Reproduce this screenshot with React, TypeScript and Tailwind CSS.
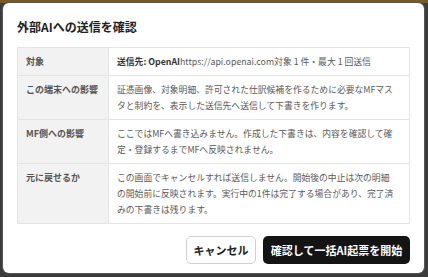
import * as React from "react"

const rows: { label: string; body: React.ReactNode }[] = [
  {
    label: "対象",
    body: (
      <span>
        <span className="font-bold text-[#333]">送信先: OpenAI</span>
        <span>https://api.openai.com</span>
        <span>対象 1 件・最大 1 回送信</span>
      </span>
    ),
  },
  {
    label: "この端末への影響",
    body: "証憑画像、対象明細、許可された仕訳候補を作るために必要なMFマスタと制約を、表示した送信先へ送信して下書きを作ります。",
  },
  {
    label: "MF側への影響",
    body: "ここではMFへ書き込みません。作成した下書きは、内容を確認して確定・登録するまでMFへ反映されません。",
  },
  {
    label: "元に戻せるか",
    body: (
      <>
        この画面でキャンセルすれば送信しません。開始後の中止は次の明細の開始前に反映されます。実行中の1件は完了する場合があり、完了済
        <br />
        みの下書きは残ります。
      </>
    ),
  },
]

export default function App() {
  return (
    <div
      className="flex h-[277px] w-[428px] flex-col overflow-hidden bg-[#3c3c3c]"
      style={{ fontFamily: '"Noto Sans CJK JP", "Noto Sans", sans-serif' }}
    >
      <div className="h-[3px] shrink-0 bg-[#7a5a22]" />
      <div className="px-[3px]">
        <div className="flex h-[270px] w-[421px] flex-col rounded-[6px] bg-white px-[14px] pt-[16px] pb-[12px] shadow-[0_0_0_1px_#555]">
          <h2 className="text-[12px] leading-[16px] font-bold text-[#222]">外部AIへの送信を確認</h2>

          <div className="mt-[12px] border border-[#e4e4e4] leading-[16px]">
            {rows.map((r, i) => (
              <div key={r.label} className={i === 0 ? "flex" : "flex border-t border-[#e4e4e4]"}>
                <div className="w-[90px] shrink-0 bg-[#f2f2f2] px-[8px] pt-[6px] pb-[5px] text-[9px] font-bold text-[#555]">
                  {r.label}
                </div>
                <div className="flex-1 border-l border-[#e4e4e4] pt-[6px] pr-[13px] pb-[5px] pl-[8px] text-[8.8px] text-[#5a5a5a]">
                  {r.body}
                </div>
              </div>
            ))}
          </div>

          <div className="mt-[12px] flex justify-end gap-[7px]">
            <button className="h-[28px] w-[70px] rounded-[5px] border border-[#cfcfcf] bg-white text-[11px] font-bold text-[#222]">
              キャンセル
            </button>
            <button className="h-[28px] w-[147px] rounded-[5px] bg-[#141414] text-[11px] font-bold text-white">
              確認して一括AI起票を開始
            </button>
          </div>
        </div>
      </div>
    </div>
  )
}
